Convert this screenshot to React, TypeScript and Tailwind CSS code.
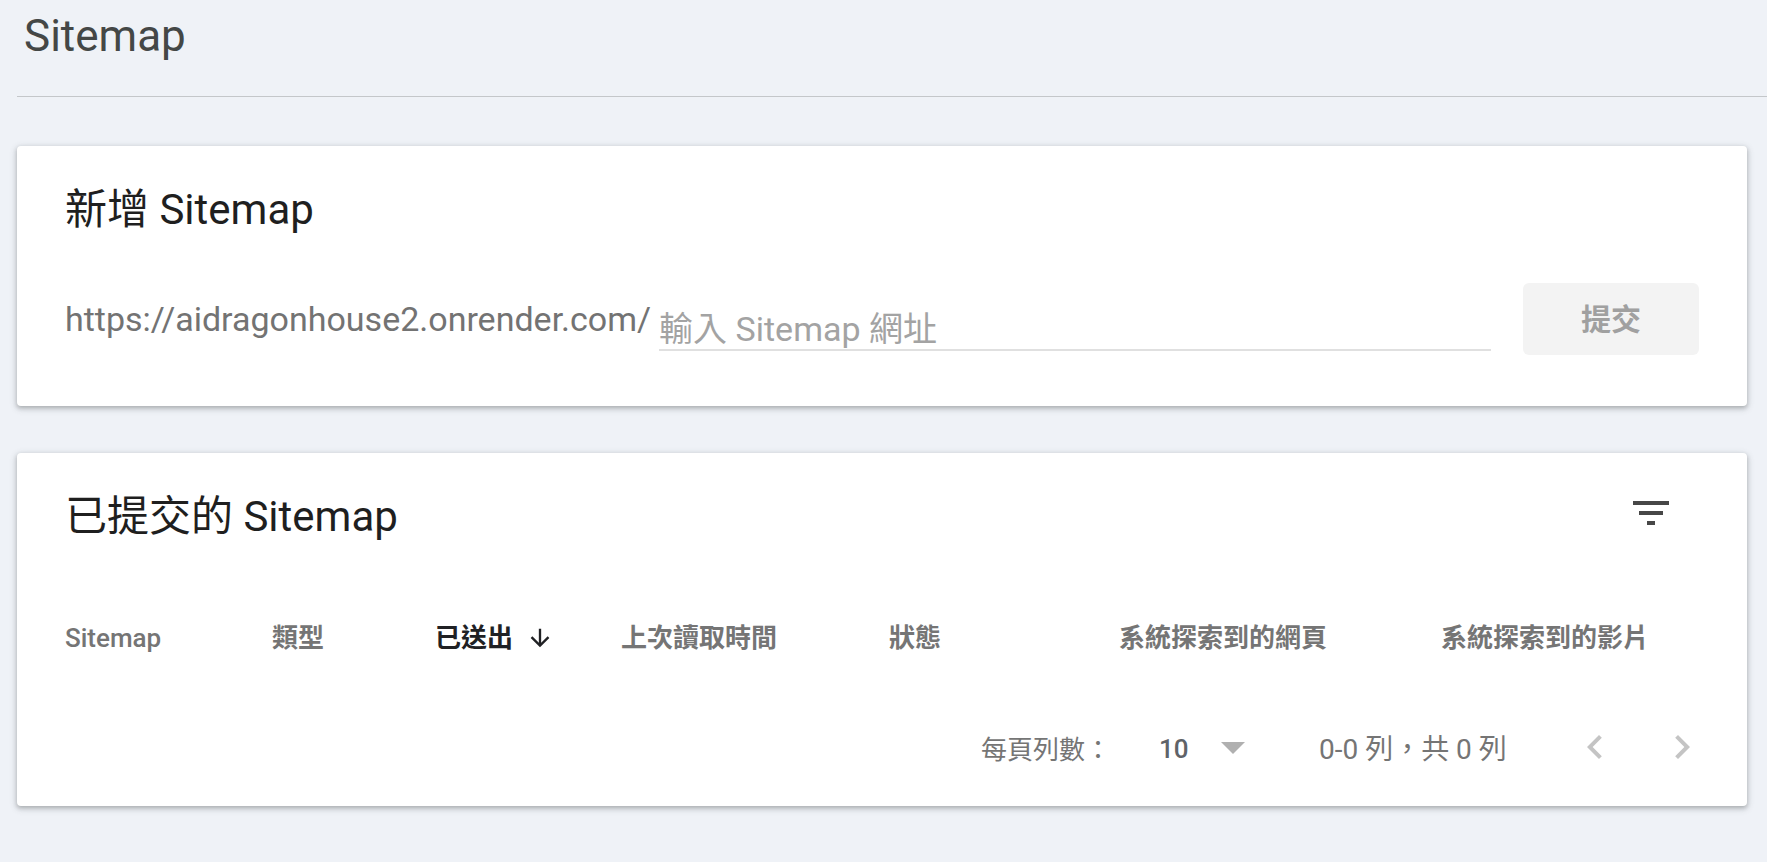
import React from "react";

const FONT = { fontFamily: 'Roboto, "Noto Sans CJK TC", "Noto Sans CJK SC", sans-serif' };

function FilterIcon() {
  return (
    <svg width="48" height="48" viewBox="0 0 24 24" className="block">
      <path d="M10 18h4v-2h-4v2zM3 6v2h18V6H3zm3 7h12v-2H6v2z" fill="#474747" />
    </svg>
  );
}

function ArrowDown() {
  return (
    <svg width="28" height="28" viewBox="0 0 24 24" className="block">
      <path d="M20 12l-1.41-1.41L13 16.17V4h-2v12.17l-5.58-5.59L4 12l8 8 8-8z" fill="#202124" />
    </svg>
  );
}

function ChevronLeft() {
  return (
    <svg width="48" height="48" viewBox="0 0 24 24" className="block">
      <path d="M15.41 7.41L14 6l-6 6 6 6 1.41-1.41L10.83 12z" fill="#c4c4c4" />
    </svg>
  );
}

function ChevronRight() {
  return (
    <svg width="48" height="48" viewBox="0 0 24 24" className="block">
      <path d="M10 6L8.59 7.41 13.17 12l-4.58 4.59L10 18l6-6z" fill="#c4c4c4" />
    </svg>
  );
}

export default function App() {
  return (
    <div className="min-h-screen w-full bg-[#eff2f7] pl-[17px] pb-[40px]" style={FONT}>
      {/* Page header */}
      <div className="pt-[10px]">
        <h1 className="pl-[7px] text-[44px] leading-[52px] font-normal text-[#444746]">Sitemap</h1>
        <div className="mt-[34px] h-[1px] bg-[#c4c7ca]" />
      </div>

      {/* Add sitemap card */}
      <div className="mt-[49px] mr-[20px] rounded-[4px] bg-white px-[48px] pt-[39px] pb-[51px] shadow-[0_2px_4px_0_rgba(60,64,67,0.3),0_2px_6px_2px_rgba(60,64,67,0.12)]">
        <h2 className="text-[42px] leading-[50px] font-normal text-[#1f1f1f]">新增 Sitemap</h2>
        <div className="mt-[48px] flex h-[72px] items-center">
          <span className="whitespace-nowrap text-[34px] leading-[40px] text-[#737373]">
            https://aidragonhouse2.onrender.com/
          </span>
          <input
            type="text"
            placeholder="輸入 Sitemap 網址"
            className="ml-[8px] mb-[4px] h-[42px] min-w-0 flex-1 self-end border-b-2 border-[#e0e0e0] bg-transparent p-0 text-[34px] text-[#202124] outline-none placeholder:text-[#a3a3a3]"
          />
          <button className="ml-[32px] h-[72px] w-[176px] shrink-0 rounded-[6px] bg-[#f3f3f3] text-[30px] font-bold text-[#a0a0a0]">
            提交
          </button>
        </div>
      </div>

      {/* Submitted sitemaps card */}
      <div className="mt-[47px] mr-[20px] rounded-[4px] bg-white pt-[36px] pb-[35px] shadow-[0_2px_4px_0_rgba(60,64,67,0.3),0_2px_6px_2px_rgba(60,64,67,0.12)]">
        <div className="flex items-start justify-between pl-[48px] pr-[72px]">
          <h2 className="mt-[3px] text-[42px] leading-[50px] font-normal text-[#1f1f1f]">已提交的 Sitemap</h2>
          <button className="block">
            <FilterIcon />
          </button>
        </div>

        <div className="mt-[80px] grid grid-cols-[207px_163px_186px_268px_230px_322px_1fr] items-center pl-[48px] pr-[48px] text-[26px] leading-[32px] text-[#757575]">
          <div className="font-medium">Sitemap</div>
          <div className="font-bold">類型</div>
          <div className="flex items-center font-bold text-[#202124]">
            <span>已送出</span>
            <span className="ml-[13px]">
              <ArrowDown />
            </span>
          </div>
          <div className="font-bold">上次讀取時間</div>
          <div className="font-bold">狀態</div>
          <div className="font-bold">系統探索到的網頁</div>
          <div className="font-bold">系統探索到的影片</div>
        </div>

        <div className="mt-[69px] flex h-[48px] items-center justify-end pr-[41px] text-[26px] text-[#757575]">
          <span className="w-[178px] whitespace-nowrap pt-[6px]">每頁列數：</span>
          <span className="w-[62px] pt-[5px] font-medium text-[#5f6368]">10</span>
          <svg width="24" height="12" viewBox="0 0 24 12" className="mt-[2px] block">
            <polygon points="0,0 24,0 12,12" fill="#b0b0b0" />
          </svg>
          <span className="ml-[74px] w-[252px] whitespace-nowrap pt-[6px] text-[28px]">0-0 列，共 0 列</span>
          <button className="block">
            <ChevronLeft />
          </button>
          <button className="ml-[39px] block">
            <ChevronRight />
          </button>
        </div>
      </div>
    </div>
  );
}
